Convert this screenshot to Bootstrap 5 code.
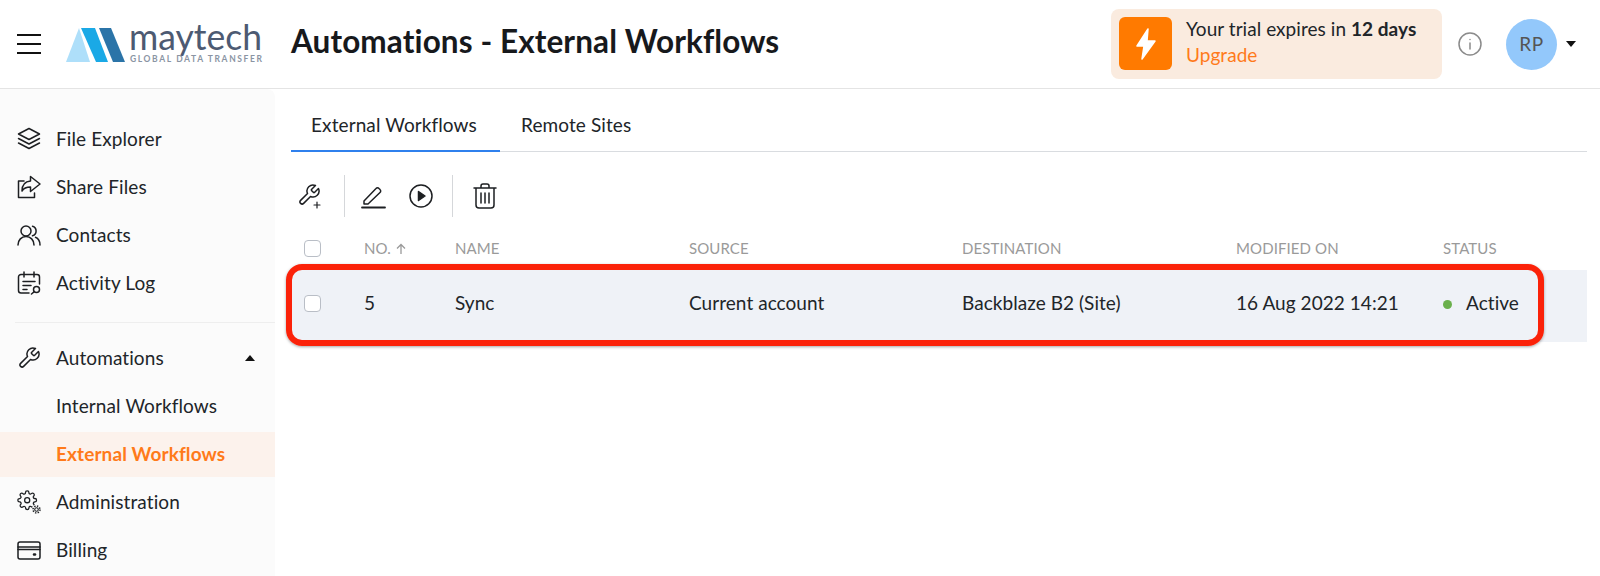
<!DOCTYPE html>
<html lang="en">
<head>
<meta charset="utf-8">
<title>Automations - External Workflows</title>
<link href="https://cdn.jsdelivr.net/npm/bootstrap@5.3.0/dist/css/bootstrap.min.css" rel="stylesheet">
<style>
html,body{height:576px;overflow:hidden}
body{font-family:"Lato","Noto Sans",sans-serif;font-size:19px;color:#212529;background:#fff;position:relative}
svg.ico{fill:none;stroke:#1d1f22;stroke-width:1.5;stroke-linecap:round;stroke-linejoin:round;flex:none}
.topbar{height:89px;border-bottom:1px solid #e4e4e4;padding-left:17px}
.burger{width:24px;height:20px}
.logo{margin-left:25px;width:203px;height:40px;margin-top:-1px;flex:none}
.logo-word{font-size:37px;font-weight:400;fill:#4d5a72;font-family:"Lato",sans-serif}
.logo-tag{font-size:8.5px;font-weight:700;fill:#8a94a3;font-family:"Lato",sans-serif}
.page-title{font-family:"Lato",sans-serif;font-size:31.5px;font-weight:700;margin:-4px 0 0 22px;color:#17191c;letter-spacing:.1px;white-space:nowrap}
.trial{width:331px;height:70px;background:#faebdf;border-radius:8px;padding:8px;margin-top:-1px}
.bolt{width:53px;height:53px;background:#ff7a00;border-radius:6px;flex:none}
.trial-text{margin-left:14px;font-size:19px;line-height:26px;padding-bottom:4px;letter-spacing:.05px}
.upgrade{color:#ff7a1a}
.info{margin-left:16px}
.avatar-rp{width:51px;height:51px;border-radius:50%;background:#93c8fb;color:#555;margin-left:24px;font-size:19px;letter-spacing:.5px}
.caret-dn{width:0;height:0;border-left:5.5px solid transparent;border-right:5.5px solid transparent;border-top:6px solid #111;margin-left:9px;margin-right:24px}
.side{width:275px;height:487px;background:#fbfbfb;padding-top:26px;flex:none;border-top-right-radius:8px}
.side-row{height:48px;padding-left:17px;color:#212529;text-decoration:none;font-size:19px;letter-spacing:.1px}
.side-row span.lab{margin-left:15px}
.side-sub{padding-left:56px}
.side-on{background:#fcf2ec;color:#ff7a1a;font-weight:700;height:45px;margin-top:2px;margin-bottom:1px}
.side-sep{height:1px;background:#eee;margin:15px 0 11px 15px}
.caret-up{width:0;height:0;border-left:5.5px solid transparent;border-right:5.5px solid transparent;border-bottom:6px solid #111;margin-left:auto;margin-right:20px}
.work{flex:1;padding:0 13px 0 16px;min-width:0}
.tabbar{height:63px;border-bottom:1px solid #d9dce0}
.tabitem{height:63px;padding:22px 21px 0;color:#212529;text-decoration:none;font-size:19px;letter-spacing:.1px;margin-bottom:-1px;white-space:nowrap}
.tab-on{border-bottom:2px solid #2f80ed;width:209px;padding-left:20px;padding-right:0}
.tools{height:85px;padding-left:6px;padding-top:2px}
.vsep{width:1px;height:42px;background:#d5d7da}
.grid-t{table-layout:fixed;width:1296px;margin:0;border-collapse:collapse}
.grid-t th{font-weight:400;font-size:15px;color:#9a9a9a;height:31px;padding:0 0 10px;vertical-align:middle;letter-spacing:.1px;border:0;background:none}
.grid-t td{height:72px;padding:0 0 4px;background:#eff2f7;font-size:19px;letter-spacing:.05px;vertical-align:middle;border:0;color:#212529}
.tick{width:17px;height:17px;border:1px solid #b9bec6;border-radius:4px;background:#fff;margin-left:13px;appearance:none;display:block}
.dot{width:9px;height:9px;border-radius:50%;background:#6ab04c;display:inline-block;margin-right:14px;vertical-align:1px}
.callout{position:absolute;left:286px;top:264px;width:1258px;height:82px;border:6px solid #fb2209;border-radius:16px;box-shadow:0 1px 3px rgba(0,0,0,.35);pointer-events:none}
</style>
</head>
<body>
<header class="topbar d-flex align-items-center">
  <svg class="burger" viewBox="0 0 24 20"><path d="M0 1h24M0 10h24M0 19h24" style="stroke:#111;stroke-width:2" fill="none"/></svg>
  <svg class="logo" viewBox="0 0 203 40">
    <path d="M0 38 13 4 24 38Z" fill="#aedffa"/>
    <path d="M15 4h14l13 34H30Z" fill="#1aa9e6"/>
    <path d="M33 4h12l14 34H47Z" fill="#2b74a8"/>
    <text class="logo-word" x="63" y="26" textLength="133" lengthAdjust="spacingAndGlyphs">maytech</text>
    <text class="logo-tag" x="64" y="38" textLength="132">GLOBAL DATA TRANSFER</text>
  </svg>
  <h1 class="page-title">Automations - External Workflows</h1>
  <div class="ms-auto d-flex align-items-center">
    <div class="trial d-flex align-items-center">
      <div class="bolt d-flex align-items-center justify-content-center">
        <svg width="22" height="32" viewBox="0 0 22 32"><path d="M13 1 2 18h7l-2 13 13-18h-8z" fill="#fff" stroke="#fff" stroke-width="1.5" stroke-linejoin="round"/></svg>
      </div>
      <div class="trial-text">Your trial expires in <b>12 days</b><div class="upgrade">Upgrade</div></div>
    </div>
    <svg class="ico info" width="24" height="24" viewBox="0 0 24 24" style="stroke:#8b8b8b"><circle cx="12" cy="12" r="11"/><path d="M12 11v6M12 7.500v.1"/></svg>
    <div class="avatar-rp d-flex align-items-center justify-content-center">RP</div>
    <span class="caret-dn"></span>
  </div>
</header>
<div class="d-flex">
  <nav class="side">
    <a class="side-row d-flex align-items-center" href="#"><svg class="ico" width="24" height="24" viewBox="0 0 24 24"><path d="M12 1.500 1.500 7 12 12.500 22.500 7Z"/><path d="M1.500 11.500 12 17l10.500-5.500M1.500 16 12 21.500 22.500 16"/></svg><span class="lab">File Explorer</span></a>
    <a class="side-row d-flex align-items-center" href="#"><svg class="ico" width="24" height="24" viewBox="0 0 24 24"><path d="M7 6H1.500v16.500h16V18"/><path d="M13.500 1.500 23 9l-9.500 7.500V12C9 12 6.500 13.500 5 16c0-5.500 3-9.500 8.500-10Z"/></svg><span class="lab">Share Files</span></a>
    <a class="side-row d-flex align-items-center" href="#"><svg class="ico" width="24" height="24" viewBox="0 0 24 24"><circle cx="9" cy="8" r="5"/><path d="M1 22c0-5 3.500-8.500 8-8.500s8 3.500 8 8.500M15.500 3.200a5 5 0 0 1 0 9.600M18.500 14.200c2.800 1.200 4.500 4 4.500 7.800"/></svg><span class="lab">Contacts</span></a>
    <a class="side-row d-flex align-items-center" href="#"><svg class="ico" width="24" height="24" viewBox="0 0 24 24"><path d="M12 22H4a2.500 2.500 0 0 1-2.500-2.500V6A2.500 2.500 0 0 1 4 3.500h16A2.500 2.500 0 0 1 22.500 6v7M7 1v5M17 1v5M6 10.500h12M6 14.500h8M6 18.500h4"/><circle cx="19.500" cy="18.500" r="3"/><path d="M17.300 20.700 14.500 23"/></svg><span class="lab">Activity Log</span></a>
    <div class="side-sep"></div>
    <a class="side-row d-flex align-items-center" href="#"><svg class="ico" width="24" height="24" viewBox="0 0 24 24"><path d="M14.700 6.300a1 1 0 0 0 0 1.400l1.600 1.600a1 1 0 0 0 1.400 0l3.770-3.770a6 6 0 0 1-7.940 7.940l-6.910 6.910a2.120 2.120 0 0 1-3-3l6.910-6.910a6 6 0 0 1 7.940-7.940l-3.760 3.760z"/></svg><span class="lab">Automations</span><span class="caret-up"></span></a>
    <a class="side-row side-sub d-flex align-items-center" href="#">Internal Workflows</a>
    <a class="side-row side-sub side-on d-flex align-items-center" href="#">External Workflows</a>
    <a class="side-row d-flex align-items-center" href="#"><svg class="ico" width="24" height="24" viewBox="0 0 24 24"><g transform="scale(.85)"><circle cx="12" cy="12" r="3"/><path d="M19.400 15a1.650 1.650 0 0 0 .33 1.820l.06.06a2 2 0 0 1 0 2.830 2 2 0 0 1-2.830 0l-.06-.06a1.650 1.650 0 0 0-1.820-.33 1.650 1.650 0 0 0-1 1.510V21a2 2 0 0 1-2 2 2 2 0 0 1-2-2v-.09A1.650 1.650 0 0 0 9 19.400a1.650 1.650 0 0 0-1.820.33l-.06.06a2 2 0 0 1-2.830 0 2 2 0 0 1 0-2.830l.06-.06a1.650 1.650 0 0 0 .33-1.820 1.650 1.650 0 0 0-1.510-1H3a2 2 0 0 1-2-2 2 2 0 0 1 2-2h.09A1.650 1.650 0 0 0 4.600 9a1.650 1.650 0 0 0-.33-1.820l-.06-.06a2 2 0 0 1 0-2.830 2 2 0 0 1 2.830 0l.06.06a1.650 1.650 0 0 0 1.820.33H9a1.650 1.650 0 0 0 1-1.510V3a2 2 0 0 1 2-2 2 2 0 0 1 2 2v.09a1.650 1.650 0 0 0 1 1.510 1.650 1.650 0 0 0 1.820-.33l.06-.06a2 2 0 0 1 2.830 0 2 2 0 0 1 0 2.830l-.06.06a1.650 1.650 0 0 0-.33 1.820V9a1.650 1.650 0 0 0 1.510 1H21a2 2 0 0 1 2 2 2 2 0 0 1-2 2h-.09a1.650 1.650 0 0 0-1.510 1z"/></g><circle cx="19.500" cy="19.500" r="4.800" style="stroke:none" fill="#fbfbfb"/><circle cx="19.500" cy="19.500" r="1.800" stroke-width="1.100"/><circle cx="19.500" cy="19.500" r="3.500" style="stroke-linecap:butt" stroke-width="1.500" stroke-dasharray="1.400 1.350"/></svg><span class="lab">Administration</span></a>
    <a class="side-row d-flex align-items-center" href="#"><svg class="ico" width="24" height="24" viewBox="0 0 24 24"><rect x="1" y="4" width="22" height="17" rx="2"/><path d="M1 9h22M1 11.500h22"/><path d="M17 16.500h1" stroke-width="2.500"/></svg><span class="lab">Billing</span></a>
  </nav>
  <main class="work">
    <div class="tabbar d-flex">
      <a class="tabitem tab-on" href="#">External Workflows</a>
      <a class="tabitem" href="#">Remote Sites</a>
    </div>
    <div class="tools d-flex align-items-center">
      <svg class="ico" width="26" height="26" viewBox="0 0 26 26"><path d="M14.700 6.300a1 1 0 0 0 0 1.400l1.600 1.600a1 1 0 0 0 1.400 0l3.770-3.770a6 6 0 0 1-7.940 7.940l-6.910 6.910a2.120 2.120 0 0 1-3-3l6.910-6.910a6 6 0 0 1 7.940-7.940l-3.760 3.760z"/><path d="M20 19v6M17 22h6" stroke-width="1.200"/></svg>
      <span class="vsep" style="margin-left:21px"></span>
      <svg class="ico" width="26" height="26" viewBox="0 0 26 26" style="margin-left:16px"><path d="M3 18 15 5.500a2 2 0 0 1 3 0l1 1a2 2 0 0 1 0 3L7 21H3Z"/><path d="M1 24.500h23" stroke-width="1.800"/></svg>
      <svg class="ico" width="24" height="24" viewBox="0 0 24 24" style="margin-left:22px"><circle cx="12" cy="12" r="11"/><path d="M9.500 7.500 16 12l-6.500 4.500Z" fill="#1d1f22"/></svg>
      <span class="vsep" style="margin-left:19px"></span>
      <svg class="ico" width="24" height="26" viewBox="0 0 24 26" style="margin-left:20px"><path d="M1 5h22M8 5V3a2 2 0 0 1 2-2h4a2 2 0 0 1 2 2v2M3 5v17a3 3 0 0 0 3 3h12a3 3 0 0 0 3-3V5M8 10v10M12 10v10M16 10v10"/></svg>
    </div>
    <table class="grid-t">
      <colgroup><col style="width:73px"><col style="width:91px"><col style="width:234px"><col style="width:273px"><col style="width:274px"><col style="width:207px"><col style="width:144px"></colgroup>
      <thead><tr>
        <th><input class="tick" type="checkbox" aria-label="All"></th>
        <th>NO. <svg width="12" height="12" viewBox="0 0 12 12" fill="none" stroke="#9a9a9a" stroke-width="1.300" style="vertical-align:-1px"><path d="M6 11V1.500M2 5.500l4-4 4 4"/></svg></th>
        <th>NAME</th><th>SOURCE</th><th>DESTINATION</th><th>MODIFIED ON</th><th>STATUS</th>
      </tr></thead>
      <tbody><tr>
        <td><input class="tick" type="checkbox" aria-label="Row"></td>
        <td>5</td><td>Sync</td><td>Current account</td><td>Backblaze B2 (Site)</td><td>16 Aug 2022 14:21</td>
        <td><span class="dot"></span>Active</td>
      </tr></tbody>
    </table>
  </main>
</div>
<div class="callout"></div>
<script src="https://cdn.jsdelivr.net/npm/bootstrap@5.3.0/dist/js/bootstrap.bundle.min.js"></script>
</body>
</html>
